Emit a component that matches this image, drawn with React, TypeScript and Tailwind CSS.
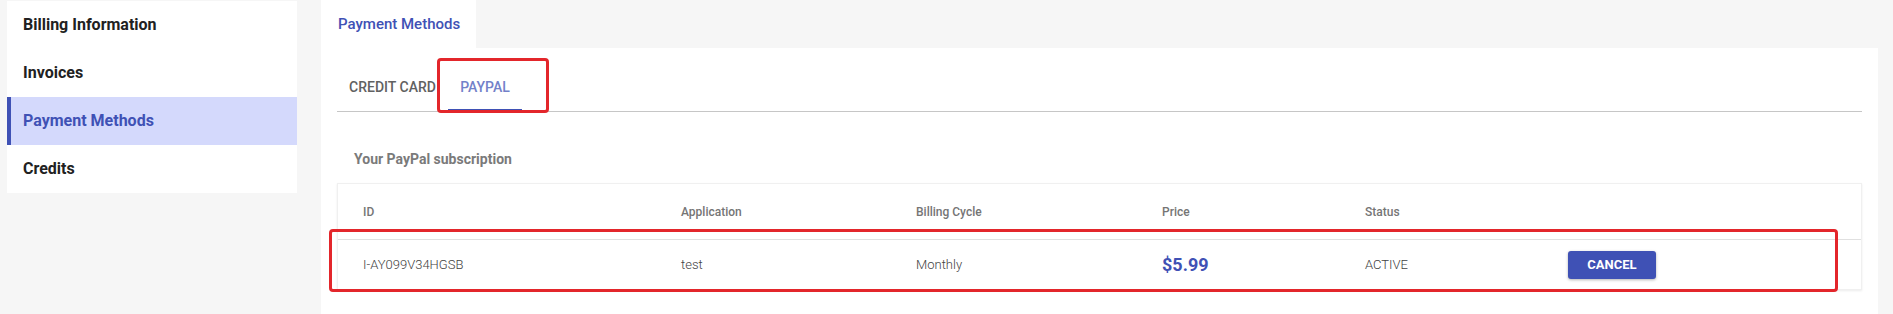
import React from 'react';

const menu = ['Billing Information', 'Invoices', 'Payment Methods', 'Credits'];

export default function App() {
  const active = 'Payment Methods';

  return (
    <div className="min-h-[314px] h-[314px] overflow-hidden bg-[#f6f6f6] flex items-start" style={{ fontFamily: 'Roboto, "Liberation Sans", sans-serif' }}>

      {/* Sidebar */}
      <aside className="ml-[7px] mt-px w-[290px] shrink-0 bg-white flex flex-col">
        {menu.map((item) => (
          <div
            key={item}
            className={
              item === active
                ? 'h-12 flex items-center pl-3 border-l-4 border-[#3f51b5] bg-[#d4d9fc] text-[#3f51b5] text-[16px] font-bold'
                : 'h-12 flex items-center pl-4 text-[#212121] text-[16px] font-bold'
            }
          >
            {item}
          </div>
        ))}
      </aside>

      {/* Main */}
      <main className="ml-6 mr-[15px] flex-1 flex flex-col h-full">
        <div className="h-12 w-[155px] bg-white flex items-center pl-[17px] text-[15px] font-medium text-[#3f51b5]">
          Payment Methods
        </div>

        <div className="flex-1 bg-white px-4 pt-4">
          {/* Method tabs */}
          <div className="relative">
            <div className="flex h-12 border-b border-[#c6c6c6]">
              <div className="w-[111px] flex items-center justify-center text-[14px] font-medium text-[#616161]">CREDIT CARD</div>
              <div className="relative w-[74px] flex items-center justify-center text-[14px] font-medium text-[#7381c9]">
                PAYPAL
                <span className="absolute left-0 right-0 bottom-0 h-[2px] bg-[#3f51b5]" />
              </div>
            </div>
            <div className="absolute left-[100px] top-[-6px] w-[112px] h-[55px] border-[3px] border-[#e3262b] rounded-[4px] pointer-events-none" />
          </div>

          <div className="mt-[37px] pl-[17px] h-5 flex items-center text-[14px] font-bold text-[#7a7a7a]">
            Your PayPal subscription
          </div>

          {/* Subscription table */}
          <div className="relative mt-[14px] border border-[#f0f0f0] shadow-[0_1px_2px_rgba(0,0,0,0.08)]">
            <div className="grid grid-cols-[318px_235px_246px_203px_203px_1fr] pl-[25px] h-14 items-center text-[12px] font-medium text-[#757575] border-b border-[#e0e0e0]">
              <span>ID</span>
              <span>Application</span>
              <span>Billing Cycle</span>
              <span>Price</span>
              <span>Status</span>
              <span />
            </div>
            <div className="grid grid-cols-[318px_235px_246px_203px_203px_1fr] pl-[25px] h-[49px] items-center text-[13px] font-light text-[#424242]">
              <span>I-AY099V34HGSB</span>
              <span>test</span>
              <span>Monthly</span>
              <span className="text-[18px] font-bold text-[#3f51b5]">$5.99</span>
              <span>ACTIVE</span>
              <span>
                <button type="button" className="w-[88px] h-7 rounded-[3px] bg-[#3f51b5] text-white text-[13px] font-bold shadow-[0_1px_3px_rgba(0,0,0,0.3)]">
                  CANCEL
                </button>
              </span>
            </div>
            <div className="absolute left-[-9px] top-[45px] w-[1509px] h-[63px] border-[3px] border-[#e3262b] rounded-[4px] pointer-events-none" />
          </div>
        </div>
      </main>
    </div>
  );
}
